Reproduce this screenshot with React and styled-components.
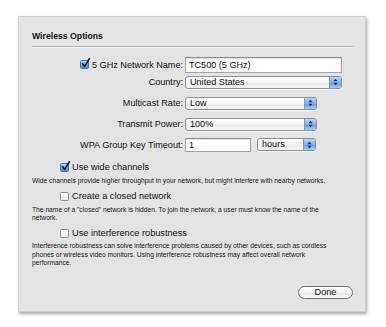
import React from "react";
import styled, { createGlobalStyle } from "styled-components";

const Global = createGlobalStyle`
  html, body { margin: 0; padding: 0; background: #ffffff; }
  body { font-family: "Liberation Sans", Arial, sans-serif; color: #111111; }
  #root { width: 386px; height: 327px; }
`;

const Page = styled.div`
  width: 386px;
  height: 327px;
  padding: 16px 0 0 18px;
  box-sizing: border-box;
`;

const Panel = styled.div`
  width: 348px;
  height: 296px;
  box-sizing: border-box;
  background: #e3e3e3;
  border: 1px solid #cfcfcf;
  box-shadow: 1px 2px 3px rgba(0, 0, 0, 0.35);
  padding: 12px 12px 12px 13px;
  display: flex;
  flex-direction: column;
`;

const Title = styled.div`
  font-weight: bold;
  font-size: 8.7px;
  line-height: 12px;
  height: 12px;
  margin-top: 1px;
  color: #111;
`;

const Separator = styled.div`
  height: 1px;
  background: #b3b3b3;
  border-bottom: 1px solid #f2f2f2;
  margin-top: 4px;
`;

const Row = styled.div`
  display: flex;
  align-items: center;
  height: ${(p) => p.$h}px;
  margin-top: ${(p) => p.$mt}px;
`;

const Label = styled.div`
  width: 151px;
  display: flex;
  justify-content: flex-end;
  align-items: center;
  gap: 3px;
  font-size: 9.1px;
  white-space: nowrap;
  margin-right: 2px;
`;

const TextField = styled.div`
  width: ${(p) => p.$w}px;
  height: ${(p) => p.$h}px;
  box-sizing: border-box;
  background: #ffffff;
  border: 1px solid #a2a2a2;
  border-top-color: #8a8a8a;
  box-shadow: inset 0 1px 1px rgba(0, 0, 0, 0.12);
  font-size: 9.1px;
  display: flex;
  align-items: center;
  padding-left: 3px;
`;

const Select = styled.div`
  width: ${(p) => p.$w}px;
  height: 13px;
  box-sizing: border-box;
  border: 1px solid #8f8f8f;
  border-radius: 3px;
  background: linear-gradient(#ffffff, #f3f3f3 50%, #e9e9e9 51%, #f6f6f6);
  display: flex;
  align-items: stretch;
  margin-left: ${(p) => p.$ml || 0}px;
  overflow: hidden;
  box-shadow: 0 1px 0 rgba(255, 255, 255, 0.6);
`;

const SelectText = styled.div`
  flex: 1;
  font-size: 9.1px;
  line-height: 11px;
  padding-left: 4px;
  white-space: nowrap;
`;

const Stepper = styled.div`
  width: 11px;
  border-left: 1px solid #7c96bf;
  background: linear-gradient(#b9d4f4, #7fb0ea 50%, #5d98e2 51%, #a7ccf5);
  display: flex;
  align-items: center;
  justify-content: center;
`;

const CheckRow = styled.div`
  display: flex;
  align-items: center;
  height: 11px;
  padding-left: 28px;
  margin-top: ${(p) => p.$mt}px;
  gap: 3px;
  font-size: 9.2px;
`;

const Box = styled.span`
  width: 9px;
  height: 9px;
  box-sizing: border-box;
  border: 1px solid ${(p) => (p.$checked ? "#4a6ea8" : "#8d8d8d")};
  border-radius: 1.5px;
  background: ${(p) =>
    p.$checked
      ? "linear-gradient(#b7d3f5, #6fa5e8 55%, #4d8be0)"
      : "linear-gradient(#ffffff, #e9e9e9)"};
  position: relative;
  flex: none;
`;

const CheckMark = styled.svg`
  position: absolute;
  left: 0px;
  top: -3px;
  width: 9px;
  height: 10px;
  overflow: visible;
`;

const Desc = styled.div`
  font-size: 6.7px;
  line-height: 8.5px;
  margin-top: ${(p) => p.$mt}px;
  color: #151515;
  padding-right: 18px;
`;

const Footer = styled.div`
  display: flex;
  justify-content: flex-end;
  margin-top: 18px;
`;

const Button = styled.div`
  width: 55px;
  height: 13px;
  box-sizing: border-box;
  border: 1px solid #6d6d6d;
  border-radius: 7px;
  background: linear-gradient(#ffffff, #f4f4f4 50%, #e6e6e6 51%, #fafafa);
  font-size: 9.2px;
  display: flex;
  align-items: center;
  justify-content: center;
  color: #111;
`;

function Arrows() {
  return (
    <svg width="5" height="8" viewBox="0 0 5 8">
      <path d="M0.5 3.2 L2.5 0.8 L4.5 3.2 Z" fill="#1d2f52" />
      <path d="M0.5 4.8 L2.5 7.2 L4.5 4.8 Z" fill="#1d2f52" />
    </svg>
  );
}

function PopUp({ w, ml, children }) {
  return (
    <Select $w={w} $ml={ml}>
      <SelectText>{children}</SelectText>
      <Stepper>
        <Arrows />
      </Stepper>
    </Select>
  );
}

function Checkbox({ checked }) {
  return (
    <Box $checked={checked}>
      {checked && (
        <CheckMark viewBox="0 0 9 10">
          <path
            d="M1.6 5.8 L3.6 8.4 L8.4 0.8"
            fill="none"
            stroke="#0f1d3a"
            strokeWidth="1.6"
            strokeLinecap="round"
            strokeLinejoin="round"
          />
        </CheckMark>
      )}
    </Box>
  );
}

export default function App() {
  return (
    <>
      <Global />
      <Page>
        <Panel>
          <Title>Wireless Options</Title>
          <Separator />
          <Row $h={16} $mt={9}>
            <Label>
              <Checkbox checked />
              <span>5 GHz Network Name:</span>
            </Label>
            <TextField $w={157} $h={16}>TC500 (5 GHz)</TextField>
          </Row>
          <Row $h={13} $mt={3}>
            <Label>Country:</Label>
            <PopUp w={157}>United States</PopUp>
          </Row>
          <Row $h={13} $mt={8}>
            <Label>Multicast Rate:</Label>
            <PopUp w={132}>Low</PopUp>
          </Row>
          <Row $h={13} $mt={8}>
            <Label>Transmit Power:</Label>
            <PopUp w={132}>100%</PopUp>
          </Row>
          <Row $h={14} $mt={7}>
            <Label>WPA Group Key Timeout:</Label>
            <TextField $w={66} $h={14}>1</TextField>
            <PopUp w={59} ml={6}>hours</PopUp>
          </Row>
          <CheckRow $mt={10}>
            <Checkbox checked />
            <span>Use wide channels</span>
          </CheckRow>
          <Desc $mt={4}>
            Wide channels provide higher throughput in your network, but might
            interfere with nearby networks.
          </Desc>
          <CheckRow $mt={6}>
            <Checkbox />
            <span>Create a closed network</span>
          </CheckRow>
          <Desc $mt={4}>
            The name of a "closed" network is hidden. To join the network, a user
            must know the name of the network.
          </Desc>
          <CheckRow $mt={5}>
            <Checkbox />
            <span>Use interference robustness</span>
          </CheckRow>
          <Desc $mt={4}>
            Interference robustness can solve interference problems caused by
            other devices, such as cordless phones or wireless video monitors.
            Using interference robustness may affect overall network performance.
          </Desc>
          <Footer>
            <Button>Done</Button>
          </Footer>
        </Panel>
      </Page>
    </>
  );
}
